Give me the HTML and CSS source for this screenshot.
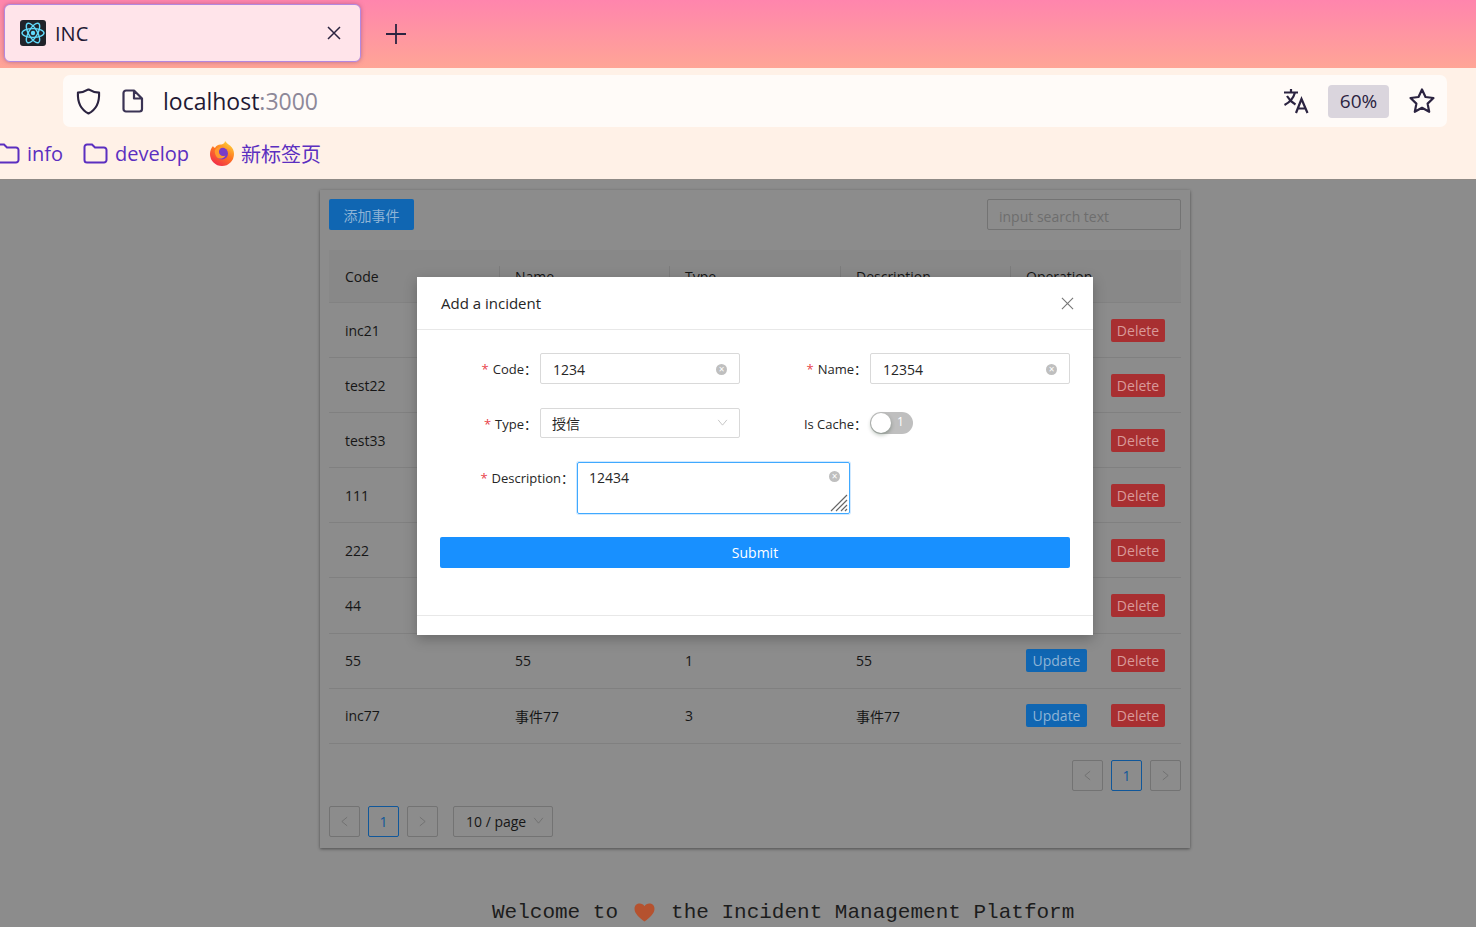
FILE: index.html
```html
<!DOCTYPE html>
<html>

<head>
    <title>INC</title>
    <link rel="stylesheet" href="styles.css">
</head>

<body>
    <div class="browser-top">
        <div class="tab-bar">
            <div class="tab">
                <svg class="tab-icon" viewBox="0 0 26 26">
                    <rect width="26" height="26" rx="3" fill="#20232a" />
                    <g fill="none" stroke="#61dafb" stroke-width="1.4">
                        <ellipse cx="13" cy="13" rx="11" ry="4.4" />
                        <ellipse cx="13" cy="13" rx="11" ry="4.4" transform="rotate(60 13 13)" />
                        <ellipse cx="13" cy="13" rx="11" ry="4.4" transform="rotate(120 13 13)" />
                    </g>
                    <circle cx="13" cy="13" r="2.2" fill="#61dafb" />
                </svg>
                <span class="tab-title">INC</span>
                <svg class="tab-close" viewBox="0 0 14 14">
                    <path d="M1 1 L13 13 M13 1 L1 13" stroke="#2b2340" stroke-width="1.5" />
                </svg>
            </div>
            <svg class="new-tab" viewBox="0 0 20 20">
                <path d="M10 0 V20 M0 10 H20" stroke="#2b2340" stroke-width="1.8" />
            </svg>
        </div>
        <div class="url-row">
            <div class="url-bar">
                <svg class="shield" viewBox="0 0 26 28">
                    <path d="M13 1.5 C16 3.5 20 4.5 24 4.8 C24.5 15 21 22.5 13 26.5 C5 22.5 1.5 15 2 4.8 C6 4.5 10 3.5 13 1.5 Z" fill="none" stroke="#2b2340" stroke-width="2.2" stroke-linejoin="round" />
                </svg>
                <svg class="page-icon" viewBox="0 0 22 24">
                    <path d="M4 1.5 H12 L20 9.5 V20 A2.5 2.5 0 0 1 17.5 22.5 H4 A2.5 2.5 0 0 1 1.5 20 V4 A2.5 2.5 0 0 1 4 1.5 Z M12 1.5 V9.5 H20" fill="none" stroke="#3a3354" stroke-width="2.2" stroke-linejoin="round" />
                </svg>
                <span class="url-text">localhost<span class="url-port">:3000</span></span>
                <svg class="translate-icon" viewBox="0 0 26 26">
                    <path d="M1 4.5 H15 M8 1 V4.5 M12 4.5 C10.5 10 6.5 14.5 1.5 17 M4 8 C6 11.5 9 14.5 12.5 16.5 M13 25 L18.5 11 L24.5 25 M15 20.5 H22.5" fill="none" stroke="#2b2340" stroke-width="2.2" />
                </svg>
                <span class="zoom-level">60%</span>
                <svg class="star-icon" viewBox="0 0 28 28">
                    <path d="M14 2.5 L17.5 10 L25.5 11 L19.6 16.6 L21.2 24.8 L14 20.8 L6.8 24.8 L8.4 16.6 L2.5 11 L10.5 10 Z" fill="none" stroke="#2b2340" stroke-width="2.2" stroke-linejoin="round" />
                </svg>
            </div>
        </div>
        <div class="bookmarks">
            <div class="bookmark bookmark-first">
                <svg class="folder" viewBox="0 0 25 21">
                    <path d="M4 1.5 H9 L12 4.5 H21 A2.5 2.5 0 0 1 23.5 7 V17 A2.5 2.5 0 0 1 21 19.5 H4 A2.5 2.5 0 0 1 1.5 17 V4 A2.5 2.5 0 0 1 4 1.5 Z" fill="none" stroke="#5b2fc0" stroke-width="2" />
                </svg>
                <span>info</span>
            </div>
            <div class="bookmark">
                <svg class="folder" viewBox="0 0 25 21">
                    <path d="M4 1.5 H9 L12 4.5 H21 A2.5 2.5 0 0 1 23.5 7 V17 A2.5 2.5 0 0 1 21 19.5 H4 A2.5 2.5 0 0 1 1.5 17 V4 A2.5 2.5 0 0 1 4 1.5 Z" fill="none" stroke="#5b2fc0" stroke-width="2" />
                </svg>
                <span>develop</span>
            </div>
            <div class="bookmark">
                <svg class="firefox" viewBox="0 0 26 26">
                    <defs>
                        <linearGradient id="foxGrad" x1="0.8" y1="0" x2="0.2" y2="1">
                            <stop offset="0" stop-color="#ffd83a" />
                            <stop offset="0.45" stop-color="#ff7a20" />
                            <stop offset="1" stop-color="#f0264e" />
                        </linearGradient>
                    </defs>
                    <path d="M16 1 C17.5 3 19 4 21 5.5 C24 8 25 11 25 14 A12 12 0 0 1 1 14 C1 11 2 8 4 6 C4.5 7 5 7.5 6 8 C7 5.5 10 4 12.5 4.5 C14.5 4 16 3 16 1 Z" fill="url(#foxGrad)" />
                    <circle cx="13" cy="13.5" r="6" fill="#7a3bc8" />
                    <path d="M6 10 C8 6.5 13 6 15 7.5 C11.5 7.5 10 9.5 10 12 C10 15 13 17 16.5 15.5 C15 19 9 20 7 16 C6 14 5.5 12 6 10 Z" fill="#ff9a2e" />
                </svg>
                <span>新标签页</span>
            </div>
        </div>
    </div>

    <div class="page">
        <div class="card">
            <div class="toolbar">
                <button class="btn btn-add">添加事件</button>
                <div class="search-box">input search text</div>
            </div>

            <div class="table">
                <div class="table-row table-head">
                    <div class="cell">Code</div>
                    <div class="cell head-sep">Name</div>
                    <div class="cell head-sep">Type</div>
                    <div class="cell head-sep">Description</div>
                    <div class="cell head-sep">Operation</div>
                </div>
                <div class="table-row">
                    <div class="cell">inc21</div><div class="cell"></div><div class="cell"></div><div class="cell"></div>
                    <div class="cell cell-ops"><button class="btn btn-update">Update</button><button class="btn btn-delete">Delete</button></div>
                </div>
                <div class="table-row">
                    <div class="cell">test22</div><div class="cell"></div><div class="cell"></div><div class="cell"></div>
                    <div class="cell cell-ops"><button class="btn btn-update">Update</button><button class="btn btn-delete">Delete</button></div>
                </div>
                <div class="table-row">
                    <div class="cell">test33</div><div class="cell"></div><div class="cell"></div><div class="cell"></div>
                    <div class="cell cell-ops"><button class="btn btn-update">Update</button><button class="btn btn-delete">Delete</button></div>
                </div>
                <div class="table-row">
                    <div class="cell">111</div><div class="cell"></div><div class="cell"></div><div class="cell"></div>
                    <div class="cell cell-ops"><button class="btn btn-update">Update</button><button class="btn btn-delete">Delete</button></div>
                </div>
                <div class="table-row">
                    <div class="cell">222</div><div class="cell"></div><div class="cell"></div><div class="cell"></div>
                    <div class="cell cell-ops"><button class="btn btn-update">Update</button><button class="btn btn-delete">Delete</button></div>
                </div>
                <div class="table-row">
                    <div class="cell">44</div><div class="cell"></div><div class="cell"></div><div class="cell"></div>
                    <div class="cell cell-ops"><button class="btn btn-update">Update</button><button class="btn btn-delete">Delete</button></div>
                </div>
                <div class="table-row">
                    <div class="cell">55</div><div class="cell">55</div><div class="cell">1</div><div class="cell">55</div>
                    <div class="cell cell-ops"><button class="btn btn-update">Update</button><button class="btn btn-delete">Delete</button></div>
                </div>
                <div class="table-row">
                    <div class="cell">inc77</div><div class="cell">事件77</div><div class="cell">3</div><div class="cell">事件77</div>
                    <div class="cell cell-ops"><button class="btn btn-update">Update</button><button class="btn btn-delete">Delete</button></div>
                </div>
            </div>

            <div class="pager pager-right">
                <div class="pager-item"><svg class="pager-arrow" viewBox="0 0 8 12"><path d="M7 1 L1 6 L7 11" /></svg></div>
                <div class="pager-item pager-active">1</div>
                <div class="pager-item"><svg class="pager-arrow" viewBox="0 0 8 12"><path d="M1 1 L7 6 L1 11" /></svg></div>
            </div>
            <div class="pager pager-left">
                <div class="pager-item"><svg class="pager-arrow" viewBox="0 0 8 12"><path d="M7 1 L1 6 L7 11" /></svg></div>
                <div class="pager-item pager-active">1</div>
                <div class="pager-item"><svg class="pager-arrow" viewBox="0 0 8 12"><path d="M1 1 L7 6 L1 11" /></svg></div>
                <div class="page-size">10 / page<svg class="page-size-arrow" viewBox="0 0 12 8"><path d="M1 1 L6 7 L11 1" /></svg></div>
            </div>
        </div>

        <div class="welcome">
            Welcome to
            <svg class="heart" viewBox="0 0 22 20">
                <path d="M11 19.5 C6 15.5 0.5 11.5 0.5 6 C0.5 2.5 3 0.5 6 0.5 C8 0.5 10 1.5 11 3.5 C12 1.5 14 0.5 16 0.5 C19 0.5 21.5 2.5 21.5 6 C21.5 11.5 16 15.5 11 19.5 Z" fill="#b5522f" />
            </svg>
            the Incident Management Platform
        </div>

        <div class="modal">
            <div class="modal-header">
                <span>Add a incident</span>
                <svg class="modal-close" viewBox="0 0 14 14">
                    <path d="M1 1 L13 13 M13 1 L1 13" stroke="#777" stroke-width="1.2" />
                </svg>
            </div>
            <div class="modal-body">
                <div class="form-row">
                    <div class="form-item">
                        <label class="form-label"><span class="required">*</span>Code：</label>
                        <div class="input-box">1234<span class="clear-icon">×</span></div>
                    </div>
                    <div class="form-item">
                        <label class="form-label"><span class="required">*</span>Name：</label>
                        <div class="input-box">12354<span class="clear-icon">×</span></div>
                    </div>
                </div>
                <div class="form-row form-row-second">
                    <div class="form-item">
                        <label class="form-label"><span class="required">*</span>Type：</label>
                        <div class="input-box select-box">授信<svg class="select-arrow" viewBox="0 0 12 8"><path d="M1 1 L6 7 L11 1" /></svg></div>
                    </div>
                    <div class="form-item">
                        <label class="form-label">Is Cache：</label>
                        <div class="switch"><span class="switch-knob"></span><span class="switch-text">1</span></div>
                    </div>
                </div>
                <div class="form-item form-item-wide">
                    <label class="form-label form-label-wide"><span class="required">*</span>Description：</label>
                    <div class="textarea-box">12434<span class="clear-icon">×</span>
                        <svg class="resize-grip" viewBox="0 0 18 18">
                            <path d="M1 17 L17 1 M6 17 L17 6 M11 17 L17 11 M15 17 L17 15" stroke="#666" stroke-width="1.2" />
                        </svg>
                    </div>
                </div>
                <button class="submit-button">Submit</button>
            </div>
            <div class="modal-footer"></div>
        </div>
    </div>
</body>

</html>
```

FILE: styles.css
```css
* {
    box-sizing: border-box;
}

html,
body {
    height: 100%;
}

body {
    margin: 0;
    overflow: hidden;
    font-family: "Open Sans", "Noto Sans CJK SC", sans-serif;
    font-size: 14px;
    color: #1a1a1a;
    background-color: #8c8c8c;
}

/* browser chrome */
.browser-top {
    height: 180px;
    background-color: #fff1e7;
    border-bottom: 1px solid #8f8a86;
}

.tab-bar {
    height: 68px;
    padding: 4px 0 0 4px;
    display: flex;
    align-items: flex-start;
    background: linear-gradient(180deg, #ff85ad 0%, #ffa596 100%);
}

.tab {
    width: 357px;
    height: 58px;
    padding: 0 19px 0 15px;
    display: flex;
    align-items: center;
    background-color: #ffe4ea;
    border: 1px solid #b388e0;
    border-radius: 6px;
    box-shadow: 0 0 4px rgba(120, 60, 120, 0.5);
}

.tab-icon {
    width: 26px;
    height: 26px;
}

.tab-title {
    margin-left: 9px;
    flex: 1;
    font-size: 20px;
    color: #1f1934;
}

.tab-close {
    width: 14px;
    height: 14px;
}

.new-tab {
    width: 20px;
    height: 20px;
    margin: 20px 0 0 25px;
}

.url-row {
    padding: 7px 29px 0 63px;
}

.url-bar {
    height: 52px;
    padding: 0 11px 0 13px;
    display: flex;
    align-items: center;
    background-color: #fffbf8;
    border-radius: 7px;
}

.shield {
    width: 25px;
    height: 27px;
}

.page-icon {
    width: 22px;
    height: 24px;
    margin-left: 21px;
}

.url-text {
    margin-left: 19px;
    flex: 1;
    font-size: 23px;
    color: #1f1934;
}

.url-port {
    color: #8d8899;
}

.translate-icon {
    width: 26px;
    height: 26px;
}

.zoom-level {
    width: 61px;
    height: 33px;
    margin: 0 19px 0 19px;
    line-height: 33px;
    text-align: center;
    font-size: 19px;
    color: #2b2340;
    background-color: #dad5dd;
    border-radius: 4px;
}

.star-icon {
    width: 28px;
    height: 28px;
}

.bookmarks {
    height: 52px;
    padding-left: 0;
    display: flex;
    align-items: center;
    font-size: 20px;
    color: #5b2fc0;
}

.bookmark {
    margin-right: 20px;
    display: flex;
    align-items: center;
}

.bookmark-first {
    margin-left: -5px;
}

.folder {
    width: 25px;
    height: 21px;
    margin-right: 7px;
}

.firefox {
    width: 26px;
    height: 26px;
    margin-right: 6px;
}

/* page under the dialog, already dimmed by the mask */
.page {
    position: relative;
    height: 747px;
    padding-top: 10px;
}

.card {
    width: 870px;
    height: 658px;
    margin-left: 320px;
    padding: 9px;
    background-color: #8c8c8c;
    box-shadow: 0 1px 3px rgba(0, 0, 0, 0.45);
}

.toolbar {
    height: 31px;
    margin-bottom: 20px;
    display: flex;
    justify-content: space-between;
}

.btn {
    padding: 0;
    border: none;
    border-radius: 2px;
    font-family: inherit;
    font-size: 14px;
    color: #8eb4d6;
}

.btn-add {
    width: 85px;
    height: 31px;
    background-color: #1066b2;
}

.search-box {
    width: 194px;
    height: 31px;
    padding-left: 11px;
    line-height: 33px;
    font-size: 14px;
    color: #6e6e6e;
    border: 1px solid #737373;
    border-radius: 2px;
}

.table-row {
    height: 55.1px;
    display: grid;
    grid-template-columns: 170px 170px 171px 170px 171px;
    border-bottom: 1px solid #808080;
}

.table-head {
    height: 53px;
    background-color: #888888;
    border-bottom-color: #828282;
}

.cell {
    padding-left: 16px;
    display: flex;
    align-items: center;
    color: #161616;
}

.head-sep {
    position: relative;
}

.head-sep::before {
    content: "";
    position: absolute;
    left: 0;
    top: 16px;
    height: 22px;
    border-left: 1px solid #7c7c7c;
}

.cell-ops {
    gap: 24px;
}

.btn-update {
    width: 61px;
    height: 23px;
    background-color: #1066b2;
}

.btn-delete {
    width: 54px;
    height: 23px;
    color: #d99a9a;
    background-color: #a82f31;
}

.pager {
    display: flex;
    gap: 8px;
}

.pager-right {
    margin-top: 16px;
    justify-content: flex-end;
}

.pager-left {
    margin-top: 15px;
}

.pager-item {
    width: 31px;
    height: 31px;
    display: flex;
    align-items: center;
    justify-content: center;
    border: 1px solid #737373;
    border-radius: 2px;
}

.pager-active {
    color: #10579a;
    border-color: #10579a;
}

.pager-arrow {
    width: 7px;
    height: 11px;
    fill: none;
    stroke: #6e6e6e;
    stroke-width: 1;
}

.page-size {
    width: 100px;
    height: 31px;
    margin-left: 7px;
    padding-left: 12px;
    display: flex;
    align-items: center;
    color: #161616;
    border: 1px solid #737373;
    border-radius: 2px;
}

.page-size-arrow {
    width: 11px;
    height: 7px;
    margin: -2px 0 0 7px;
    fill: none;
    stroke: #6e6e6e;
    stroke-width: 1;
}

.welcome {
    margin-top: 53px;
    padding-left: 492px;
    display: flex;
    align-items: center;
    gap: 16px;
    font-family: "Liberation Mono", monospace;
    font-size: 21px;
    color: #1c1c1c;
}

.heart {
    width: 21px;
    height: 19px;
}

/* dialog */
.modal {
    position: absolute;
    left: 417px;
    top: 97px;
    width: 676px;
    height: 358px;
    color: #262626;
    background-color: #fff;
    box-shadow: 0 4px 12px rgba(0, 0, 0, 0.25);
}

.modal-header {
    height: 53px;
    padding: 0 19px 0 24px;
    display: flex;
    align-items: center;
    justify-content: space-between;
    font-size: 15px;
    border-bottom: 1px solid #e8e8e8;
}

.modal-close {
    width: 13px;
    height: 13px;
}

.modal-body {
    height: 285px;
    padding: 23px 23px 0 23px;
}

.form-row {
    display: flex;
    gap: 30px;
}

.form-row-second {
    margin-top: 24px;
}

.form-item {
    width: 300px;
    display: flex;
    align-items: center;
}

.form-item-wide {
    width: 410px;
    margin-top: 24px;
    align-items: flex-start;
}

.form-label {
    width: 100px;
    padding-right: 3px;
    text-align: right;
    font-size: 13px;
    white-space: nowrap;
}

.form-label-wide {
    width: 137px;
    padding-top: 6px;
}

.required {
    margin-right: 4px;
    color: #e8434a;
}

.input-box {
    position: relative;
    width: 200px;
    height: 31px;
    padding-left: 12px;
    line-height: 31px;
    font-size: 14px;
    border: 1px solid #d9d9d9;
    border-radius: 2px;
}

.select-box {
    height: 30px;
    line-height: 29px;
    padding-left: 11px;
}

.clear-icon {
    position: absolute;
    right: 12px;
    top: 10px;
    width: 11px;
    height: 11px;
    line-height: 10px;
    text-align: center;
    font-size: 10px;
    color: #fff;
    background-color: #bfbfbf;
    border-radius: 50%;
}

.select-arrow {
    position: absolute;
    right: 11px;
    top: 10px;
    width: 11px;
    height: 7px;
    fill: none;
    stroke: #bfbfbf;
    stroke-width: 1;
}

.switch {
    position: relative;
    width: 43px;
    height: 22px;
    background-color: #bfbfbf;
    border-radius: 11px;
}

.switch-knob {
    position: absolute;
    left: 1px;
    top: 1px;
    width: 20px;
    height: 20px;
    background-color: #fff;
    border-radius: 50%;
    box-shadow: 0 2px 4px rgba(0, 35, 11, 0.3);
}

.switch-text {
    position: absolute;
    left: 27px;
    top: 1px;
    font-size: 12px;
    color: #fff;
}

.textarea-box {
    position: relative;
    width: 273px;
    height: 52px;
    padding: 5px 11px;
    font-size: 14px;
    line-height: 20px;
    border: 1px solid #40a9ff;
    border-radius: 2px;
    box-shadow: 0 0 0 1px rgba(24, 144, 255, 0.2);
}

.textarea-box .clear-icon {
    top: 8px;
    right: 9px;
}

.resize-grip {
    position: absolute;
    right: 1px;
    bottom: 1px;
    width: 18px;
    height: 18px;
}

.submit-button {
    width: 630px;
    height: 31px;
    margin-top: 23px;
    padding: 0;
    display: block;
    border: none;
    border-radius: 2px;
    font-family: inherit;
    font-size: 14px;
    color: #fff;
    background-color: #1890ff;
}

.modal-footer {
    height: 20px;
    border-top: 1px solid #e8e8e8;
}
```
